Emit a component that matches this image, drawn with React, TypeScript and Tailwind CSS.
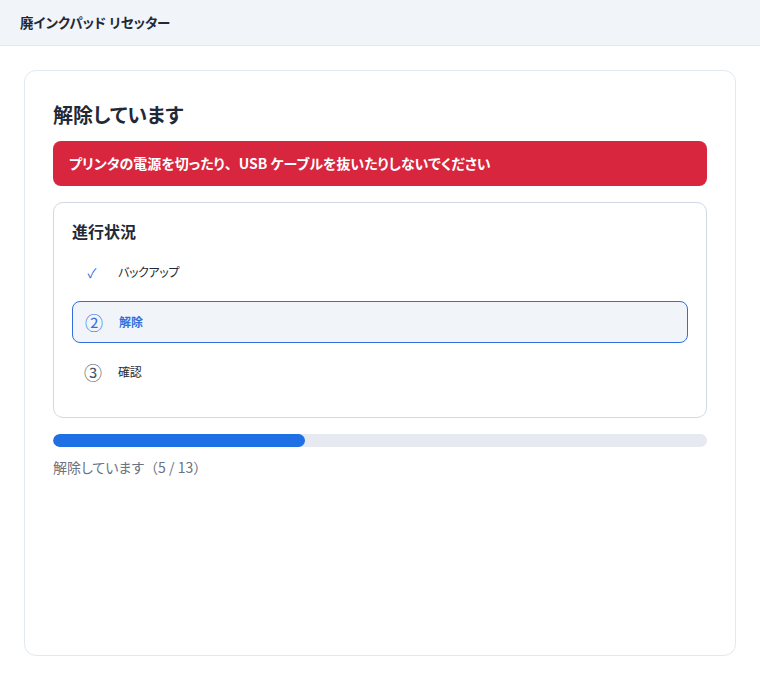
const FONT = '"Noto Sans CJK JP", "Noto Sans", sans-serif';

type StepState = 'done' | 'active' | 'pending';

const STEPS: { label: string; state: StepState; mark: string }[] = [
  { label: 'バックアップ', state: 'done', mark: '✓' },
  { label: '解除', state: 'active', mark: '②' },
  { label: '確認', state: 'pending', mark: '③' },
];

function StepRow({ label, state, mark }: { label: string; state: StepState; mark: string }) {
  if (state === 'active') {
    return (
      <li className="flex h-[42px] items-center rounded-lg border border-[#2f6fdc] bg-[#f1f4f9] px-3">
        <span className="mr-[18px] w-[16px] text-center text-[18px] leading-none text-[#2f6fdc]">{mark}</span>
        <span className="text-[12px] font-semibold text-[#2f6fdc]">{label}</span>
      </li>
    );
  }
  return (
    <li className="flex h-[42px] items-center px-3">
      <span
        className={
          state === 'done'
            ? 'mr-[18px] w-[16px] text-center text-[13px] leading-none text-[#2f6fdc]'
            : 'mr-[18px] w-[16px] text-center text-[18px] leading-none text-[#4b5563]'
        }
      >
        {mark}
      </span>
      <span className="text-[12px] tracking-[-0.03em] text-[#1f2937]">{label}</span>
    </li>
  );
}

export default function App() {
  const current = 5;
  const total = 13;

  return (
    <div
      className="flex h-screen flex-col bg-white [font-feature-settings:'palt']"
      style={{ fontFamily: FONT }}
    >
      {/* ヘッダー */}
      <header className="flex h-[46px] shrink-0 items-center border-b border-[#e2e8f0] bg-[#f1f4f9] px-5">
        <h1 className="text-[13.5px] font-semibold text-[#1f2937]">廃インクパッド リセッター</h1>
      </header>

      <main className="flex flex-1 flex-col p-6">
        <section className="flex-1 rounded-xl border border-[#e2e8f0] bg-white px-7 pt-7">
          <h2 className="text-[20px] font-semibold leading-[32px] text-[#1f2937]">解除しています</h2>

          <div className="mt-[10px] flex h-[45px] items-center rounded-lg bg-[#d7263d] px-4">
            <p className="text-[14px] font-semibold text-white">
              プリンタの電源を切ったり<span className="[font-feature-settings:normal]">、</span>USB
              ケーブルを抜いたりしないでください
            </p>
          </div>

          {/* 進行状況 */}
          <div className="mt-4 rounded-[10px] border border-[#d1d9e4] px-[18px] pb-[24px] pt-[16px]">
            <h3 className="text-[16px] font-semibold leading-[24px] text-[#1f2937]">進行状況</h3>
            <ul className="mt-[8px] flex flex-col gap-[8px]">
              {STEPS.map((s) => (
                <StepRow key={s.label} {...s} />
              ))}
            </ul>
          </div>

          <div className="mt-4 h-[13px] w-full overflow-hidden rounded-full bg-[#e6e9ef]">
            <div
              className="h-full rounded-full bg-[#1f6fe5]"
              style={{ width: `${(current / total) * 100}%` }}
            />
          </div>
          <p className="mt-[10px] text-[14px] text-[#6b7280]">
            解除しています<span className="[font-feature-settings:normal]">（</span>
            {current} / {total}
            <span className="[font-feature-settings:normal]">）</span>
          </p>
        </section>
      </main>
    </div>
  );
}
